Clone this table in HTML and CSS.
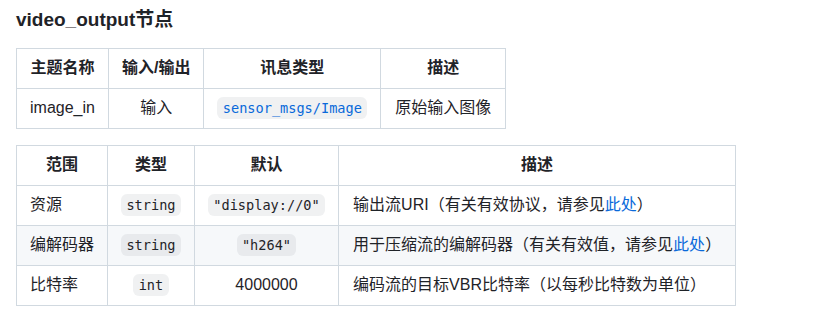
FILE: index.html
```html
<!DOCTYPE html>
<html lang="zh">
<head>
<meta charset="utf-8">
<link rel="stylesheet" href="styles.css">
</head>
<body>
<div class="doc">
  <h3 class="title">video_output节点</h3>
  <table class="tbl">
    <thead>
      <tr><th>主题名称</th><th>输入/输出</th><th>讯息类型</th><th>描述</th></tr>
    </thead>
    <tbody>
      <tr>
        <td class="left">image_in</td>
        <td>输入</td>
        <td><a class="link" href="#"><code class="code">sensor_msgs/Image</code></a></td>
        <td class="wide">原始输入图像</td>
      </tr>
    </tbody>
  </table>
  <table class="tbl">
    <thead>
      <tr><th>范围</th><th>类型</th><th>默认</th><th>描述</th></tr>
    </thead>
    <tbody>
      <tr>
        <td class="left">资源</td>
        <td><code class="code">string</code></td>
        <td><code class="code">"display://0"</code></td>
        <td class="left wide">输出流URI（有关有效协议，请参见<a class="link" href="#">此处</a>）</td>
      </tr>
      <tr>
        <td class="left">编解码器</td>
        <td><code class="code">string</code></td>
        <td><code class="code">"h264"</code></td>
        <td class="left wide">用于压缩流的编解码器（有关有效值，请参见<a class="link" href="#">此处</a>）</td>
      </tr>
      <tr>
        <td class="left">比特率</td>
        <td><code class="code">int</code></td>
        <td>4000000</td>
        <td class="left wide">编码流的目标VBR比特率（以每秒比特数为单位）</td>
      </tr>
    </tbody>
  </table>
</div>
</body>
</html>
```
FILE: styles.css
```css
html, body {
  margin: 0;
  padding: 0;
  background: #ffffff;
}
body {
  font-family: "Liberation Sans", "Noto Sans CJK SC", sans-serif;
  font-size: 16px;
  line-height: 1.5;
  color: #1f2328;
}
.doc {
  padding: 7px 16px 0 16px;
}
.title {
  margin: 0 0 16px 0;
  font-size: 19px;
  line-height: 25px;
  font-weight: 700;
}
.tbl {
  border-collapse: collapse;
  border-spacing: 0;
  margin: 0 0 16px 0;
}
.tbl th,
.tbl td {
  border: 1px solid #d1d9e0;
  padding: 7px 13px 8px 13px;
  text-align: center;
  white-space: nowrap;
  line-height: 24px;
}
.tbl th {
  font-weight: 700;
}
.tbl td.left {
  text-align: left;
}
.tbl td.wide {
  padding-left: 14px;
  padding-right: 14px;
}
.tbl tbody tr:nth-child(2n) {
  background: #f6f8fa;
}
.code {
  font-family: "DejaVu Sans Mono", "Liberation Mono", monospace;
  font-size: 13.6px;
  padding: 2.7px 5.4px;
  border-radius: 6px;
  background: rgba(129, 139, 152, 0.12);
}
.link {
  color: #0969da;
  text-decoration: none;
}
.link .code {
  color: #0969da;
}
```
